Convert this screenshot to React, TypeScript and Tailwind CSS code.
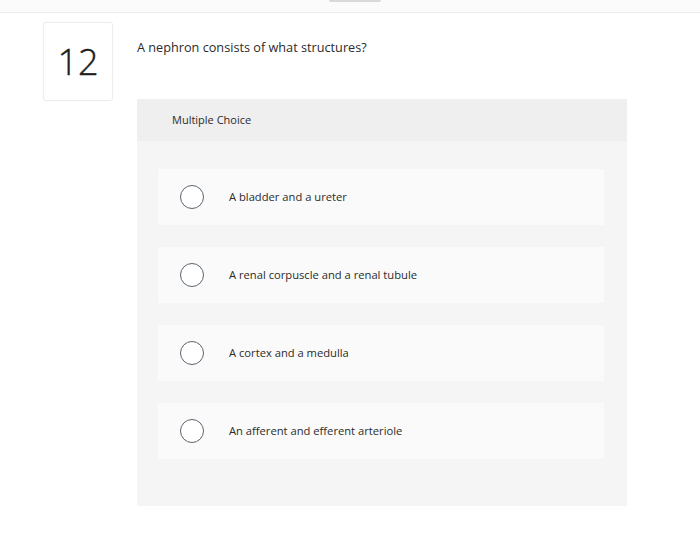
import React from 'react';

const choices = [
    'A bladder and a ureter',
    'A renal corpuscle and a renal tubule',
    'A cortex and a medulla',
    'An afferent and efferent arteriole',
];

const App: React.FC = () => {
    return (
        <div className="w-[700px] h-[556px] bg-white overflow-hidden" style={{ fontFamily: '"Open Sans", Lato, sans-serif' }}>
            {/* Top strip */}
            <div className="h-[13px] bg-[#fbfbfb] border-b border-[#ececec] flex justify-center">
                <div className="w-[52px] h-[2px] ml-[10px] bg-[#d9d9d9] rounded-b-md" />
            </div>

            <div className="flex pl-[43px] pt-[9px]">
                {/* Question number */}
                <div className="w-[70px] h-[79px] shrink-0 rounded-[3px] border border-[#ededed] bg-white shadow-[0_0_2px_rgba(0,0,0,0.04)] flex items-center justify-center">
                    <span className="text-[36px] leading-none text-[#1e1e1e] font-light [-webkit-text-stroke:0.4px_#1e1e1e]">12</span>
                </div>

                <div className="ml-[24px] w-[490px]">
                    <p className="mt-[17px] text-[12.7px] leading-[16px] text-[#2b2b2b]">A nephron consists of what structures?</p>

                    {/* Answer panel */}
                    <div className="mt-[44px] bg-[#f5f5f5]">
                        <div className="h-[42px] bg-[#efefef] flex items-center pl-[35px]">
                            <span className="text-[11px] text-[#2b2b2b]">Multiple Choice</span>
                        </div>
                        <div className="pt-[28px] pb-[47px] pl-[21px] pr-[23px] flex flex-col gap-[22px]">
                            {choices.map(c => (
                                <div key={c} className="h-[56px] bg-[#fafafa] flex items-center pl-[22px]">
                                    <div className="w-[24px] h-[24px] rounded-full border-[1.5px] border-[#5a6470] bg-white" />
                                    <span className="ml-[25px] text-[11.2px] text-[#2b2b2b]">{c}</span>
                                </div>
                            ))}
                        </div>
                    </div>
                </div>
            </div>
        </div>
    );
};

export default App;
